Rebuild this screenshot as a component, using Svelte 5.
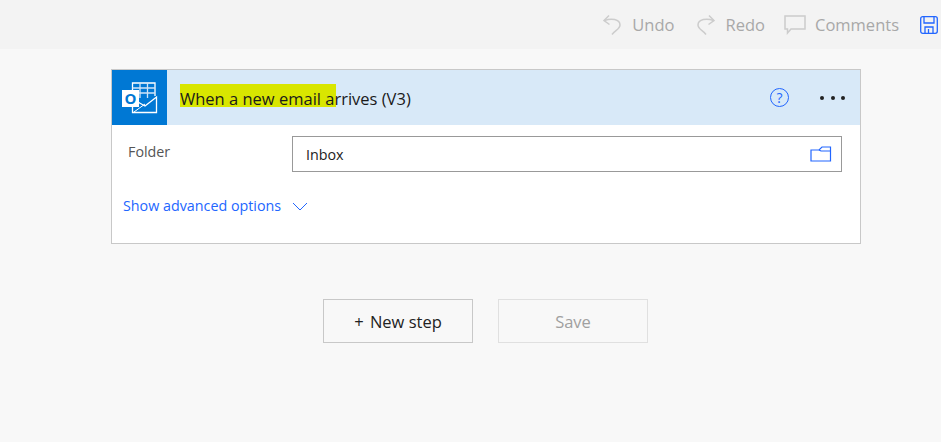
<script>
  let title = 'When a new email ';
</script>

<div class="page">
  <header class="toolbar">
    <button class="tool">
      <svg width="18" height="22" viewBox="0 0 18 22" fill="none" stroke="#ccc" stroke-width="1.500">
        <path d="M6 1.500 L1 6.500 L6.500 10.500" />
        <path d="M1.500 6.500 C8 4 17 5 17 11 C17 15 12 16.500 9 20.500" />
      </svg>
      <span>Undo</span>
    </button>
    <button class="tool redo">
      <svg width="18" height="22" viewBox="0 0 18 22" fill="none" stroke="#ccc" stroke-width="1.500">
        <path d="M12 1.500 L17 6.500 L11.500 10.500" />
        <path d="M16.500 6.500 C10 4 1 5 1 11 C1 15 6 16.500 9 20.500" />
      </svg>
      <span>Redo</span>
    </button>
    <button class="tool tight">
      <svg width="22" height="20" viewBox="0 0 22 20" fill="none" stroke="#ccc" stroke-width="1.500">
        <path d="M1 1 H21 V14 H7 L3.500 18 V14 H1 Z" />
      </svg>
      <span>Comments</span>
    </button>
    <button class="tool save" aria-label="Save">
      <svg width="18" height="18" viewBox="0 0 18 18" fill="none" stroke="#2266ff" stroke-width="1.300">
        <rect x="0.700" y="0.700" width="16.600" height="16.600" rx="2" />
        <path d="M4 1 V7 H14 V1" />
        <path d="M5 17 V11 H13 V17" />
        <path d="M8.500 13 V17" />
      </svg>
    </button>
  </header>

  <main class="canvas">
    <section class="card">
      <div class="card-head">
        <div class="logo">
          <svg width="36" height="32" viewBox="0 0 36 32">
            <path d="M10.500 8 V1 H33 V14" fill="none" stroke="#fff" stroke-width="1.300" />
            <path d="M18 1 V16 M25.500 1 V16 M10.500 6 H33 M17 11 H33" stroke="#cfe4f7" stroke-width="1.300" fill="none" />
            <path d="M10.500 17 L23 24 L34.500 15 V30.500 H10.500 Z" fill="#0078d4" stroke="#fff" stroke-width="1.300" />
            <path d="M12 30 L23 22" stroke="#fff" stroke-width="1" />
            <rect x="0" y="8" width="17" height="17" fill="#fff" />
            <text x="8.500" y="21.500" class="logo-o">O</text>
          </svg>
        </div>
        <div class="card-title"><mark>{title}a</mark>rrives (V3)</div>
        <button class="help" aria-label="Help">?</button>
        <button class="more" aria-label="More">
          <i></i><i></i><i></i>
        </button>
      </div>

      <div class="card-body">
        <div class="field">
          <label for="folder">Folder</label>
          <div class="input">
            <span id="folder">Inbox</span>
            <svg width="22" height="16" viewBox="0 0 22 16" fill="none" stroke="#2266ff" stroke-width="1.200">
              <path d="M1 5 V15 H20.500 V1 H12 L9 4 H1 Z" />
              <path d="M9 4 L11 5 H20" />
            </svg>
          </div>
        </div>
        <div class="advanced">
          <span>Show advanced options</span>
          <svg width="16" height="9" viewBox="0 0 16 9" fill="none" stroke="#2266ff" stroke-width="1">
            <path d="M1 1 L8 8 L15 1" />
          </svg>
        </div>
      </div>
    </section>

    <div class="actions">
      <button class="step"><span class="plus">+</span> New step</button>
      <button class="step disabled">Save</button>
    </div>
  </main>
</div>

<style>
  :global(body) {
    margin: 0;
    background: #f8f8f8;
  }

  .page {
    width: 941px;
    height: 442px;
    overflow: hidden;
    font-family: "Open Sans", "Noto Sans", sans-serif;
    font-size: 14px;
    color: #222;
  }

  button {
    font: inherit;
    background: none;
    border: none;
    padding: 0;
  }

  .toolbar {
    height: 49px;
    background: #f3f3f3;
    display: flex;
    justify-content: flex-end;
    align-items: center;
    padding-right: 3px;
    box-sizing: border-box;
  }

  .tool {
    display: flex;
    align-items: center;
    gap: 11px;
    margin-left: 21px;
    color: #a8a8a8;
    font-size: 16.500px;
  }

  .tool.redo {
    margin-left: 22px;
  }

  .tool.tight {
    gap: 9px;
    margin-left: 19px;
  }

  .canvas {
    padding: 20px 0 0 111px;
  }

  .card {
    width: 750px;
    height: 175px;
    box-sizing: border-box;
    border: 1px solid #c8c8c8;
    background: #fff;
  }

  .card-head {
    height: 55px;
    background: #d8e9f8;
    display: flex;
    align-items: center;
  }

  .logo {
    width: 55px;
    height: 55px;
    background: #0078d4;
    display: flex;
    align-items: center;
    justify-content: center;
  }

  .logo-o {
    font-size: 15px;
    font-weight: 700;
    fill: #0078d4;
    text-anchor: middle;
  }

  .card-title {
    margin: -1px 0 0 13px;
    flex: 1;
    font-size: 16.500px;
    color: #1a1a1a;
    line-height: 23px;
  }

  mark {
    background: #d9e600;
    color: inherit;
    display: inline-block;
    line-height: 17px;
    padding: 6px 2px 0 0;
    margin-right: -2px;
  }

  .help {
    width: 19px;
    height: 19px;
    box-sizing: border-box;
    border: 1px solid #2266ff;
    border-radius: 50%;
    color: #2266ff;
    font-size: 14px;
    line-height: 16px;
    text-align: center;
    margin-right: 31px;
  }

  .more {
    display: flex;
    gap: 6.500px;
    margin-right: 15px;
  }

  .more i {
    width: 4px;
    height: 4px;
    border-radius: 50%;
    background: #222;
  }

  .card-body {
    padding: 11px 18px 0 11px;
  }

  .field {
    display: flex;
    align-items: flex-start;
  }

  .field label {
    width: 169px;
    padding-left: 5px;
    line-height: 32px;
    color: #555;
    font-size: 14.300px;
    box-sizing: border-box;
  }

  .input {
    flex: 1;
    height: 36px;
    box-sizing: border-box;
    border: 1px solid #999;
    display: flex;
    align-items: center;
    justify-content: space-between;
    padding: 0 9px 0 13px;
    font-size: 14.300px;
  }

  .advanced {
    margin-top: 24px;
    display: flex;
    align-items: center;
    gap: 11px;
    color: #2266ff;
    font-size: 14.300px;
    line-height: 20px;
  }

  .actions {
    display: flex;
    gap: 25px;
    margin: 55px 0 0 212px;
  }

  .step {
    width: 150px;
    height: 44px;
    box-sizing: border-box;
    border: 1px solid #c8c8c8;
    font-size: 16.500px;
    color: #222;
  }

  .plus {
    margin-right: 2px;
  }

  .step.disabled {
    border-color: #e0e0e0;
    color: #a0a0a0;
  }
</style>
